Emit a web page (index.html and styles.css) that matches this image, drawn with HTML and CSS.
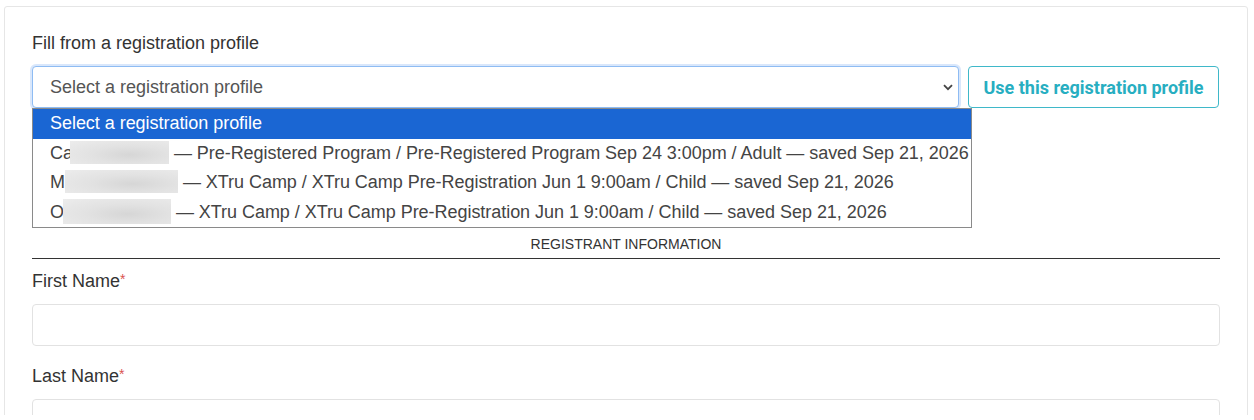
FILE: index.html
```html
<!DOCTYPE html>
<html lang="en">
<head>
<meta charset="utf-8">
<title>Registration</title>
<link rel="stylesheet" href="styles.css">
</head>
<body>
<div class="viewport">
  <div class="card">
    <div class="field">
      <div class="label">Fill from a registration profile</div>
      <div class="profile-row">
        <div class="select-wrap">
          <div class="select">
            <span>Select a registration profile</span>
            <svg class="chevron" width="10" height="7" viewBox="0 0 10 7"><path d="M1 1.2 L5 5.2 L9 1.2" fill="none" stroke="#444" stroke-width="1.8"/></svg>
          </div>
          <ul class="listbox">
            <li class="option selected">Select a registration profile</li>
            <li class="option">Ca<span class="blur blur-1"></span> — Pre-Registered Program / Pre-Registered Program Sep 24 3:00pm / Adult — saved Sep 21, 2026</li>
            <li class="option">M<span class="blur blur-2"></span> — XTru Camp / XTru Camp Pre-Registration Jun 1 9:00am / Child — saved Sep 21, 2026</li>
            <li class="option">O<span class="blur blur-3"></span> — XTru Camp / XTru Camp Pre-Registration Jun 1 9:00am / Child — saved Sep 21, 2026</li>
          </ul>
        </div>
        <button class="btn-outline" type="button">Use this registration profile</button>
      </div>
    </div>

    <div class="section-title">REGISTRANT INFORMATION</div>

    <div class="field">
      <div class="label">First Name<span class="req">*</span></div>
      <div class="input"></div>
    </div>
    <div class="field">
      <div class="label">Last Name<span class="req">*</span></div>
      <div class="input"></div>
    </div>
  </div>
</div>
</body>
</html>
```
FILE: styles.css
```css
html, body {
  margin: 0;
  padding: 0;
  background: #fff;
}
body {
  font-family: "Liberation Sans", Arial, sans-serif;
  color: #333;
}
.viewport {
  height: 415px;
  overflow: hidden;
  padding: 6px 6px 0 4px;
  box-sizing: border-box;
}
.card {
  border: 1px solid #e6e6e6;
  border-radius: 3px;
  padding: 26px 27px 40px 27px;
  min-height: 600px;
}
.field {
  margin-bottom: 20px;
}
.label {
  font-size: 18px;
  line-height: 21px;
  color: #333;
  margin-bottom: 12px;
}
.profile-row {
  display: flex;
  gap: 9px;
  align-items: stretch;
}
.select-wrap {
  position: relative;
  flex: 0 0 927px;
}
.select {
  box-sizing: border-box;
  height: 42px;
  display: flex;
  align-items: center;
  justify-content: space-between;
  padding: 0 5px 0 17px;
  border: 1px solid #8ebcf3;
  border-radius: 4px;
  box-shadow: 0 0 0 2px rgba(120, 170, 240, 0.28);
  font-size: 18px;
  color: #555;
  background: #fff;
}
.chevron {
  display: block;
}
.listbox {
  position: absolute;
  left: 0;
  top: 42px;
  width: 940px;
  box-sizing: border-box;
  margin: 0;
  padding: 0;
  list-style: none;
  background: #fff;
  border: 1px solid #8a8a8a;
  z-index: 5;
}
.option {
  height: 29.5px;
  line-height: 29.5px;
  padding-left: 17px;
  font-size: 18px;
  letter-spacing: -0.04px;
  color: #444;
  white-space: nowrap;
}
.option.selected {
  background: #1a66d3;
  color: #fff;
}
.blur {
  display: inline-block;
  position: relative;
  height: 23px;
  vertical-align: middle;
  margin-top: -3px;
  background: radial-gradient(ellipse at 60% 60%, #d6d6d6 0%, #e2e2e2 45%, #ececec 100%);
  filter: blur(0.6px);
}
.blur-1 { width: 99px; margin-left: -3px; }
.blur-2 { width: 113px; }
.blur-3 { width: 108px; margin-left: -1px; height: 25px; }
.btn-outline {
  flex: 0 0 251px;
  height: 42px;
  box-sizing: border-box;
  border: 1px solid #3fb8c9;
  border-radius: 4px;
  background: #fff;
  color: #27aec1;
  font-family: Roboto, "Liberation Sans", sans-serif;
  font-weight: 700;
  font-size: 18px;
  padding: 0;
}
.section-title {
  margin-top: 128px;
  font-size: 14px;
  line-height: 16px;
  text-align: center;
  color: #333;
  padding-bottom: 6px;
  border-bottom: 1px solid #333;
  margin-bottom: 12px;
}
.req {
  color: #d9534f;
  font-size: 14px;
  vertical-align: top;
  line-height: 16px;
}
.input {
  height: 42px;
  box-sizing: border-box;
  border: 1px solid #e2e2e2;
  border-radius: 4px;
}
.field:last-child {
  margin-bottom: 0;
}
```
